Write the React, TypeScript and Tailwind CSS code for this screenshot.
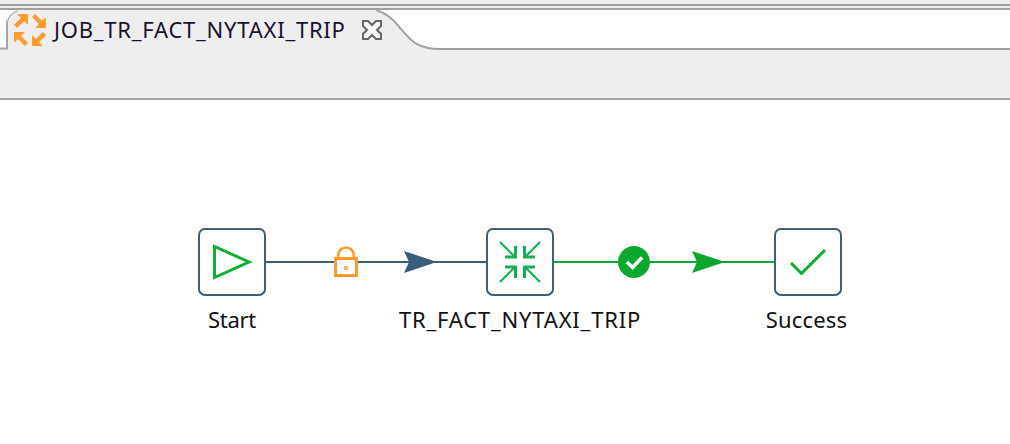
import React from "react";

const font = "font-['Noto_Sans',sans-serif]";

function TabIcon() {
  return (
    <svg width="32" height="32" viewBox="14 14 32 32" className="shrink-0">
      <g fill="#ff9a2e" stroke="#ff9a2e" strokeWidth="1">
        <polygon points="18,14.5 27.5,14.5 27.5,24" />
        <polygon points="45.5,18 45.5,27.5 36,27.5" />
        <polygon points="14.5,42 14.5,32.5 24,32.5" />
        <polygon points="32.5,36 32.5,45.5 42,45.5" />
      </g>
      <g stroke="#ff9a2e" strokeWidth="4.5" fill="none">
        <path d="M15.5 26.5 L23 19" />
        <path d="M33.5 15.5 L41 23" />
        <path d="M26.5 44.5 L19 37" />
        <path d="M44.5 33.5 L37 41" />
      </g>
    </svg>
  );
}

function CloseIcon() {
  return (
    <svg width="20" height="20" viewBox="0 0 20 20" className="shrink-0">
      <path
        d="M1 1 H6 L10 5 L14 1 H19 V6 L15 10 L19 14 V19 H14 L10 15 L6 19 H1 V14 L5 10 L1 6 Z"
        fill="#f6f6f6"
        stroke="#666"
        strokeWidth="2"
      />
    </svg>
  );
}

function PlayIcon() {
  return (
    <svg width="68" height="68" viewBox="0 0 68 68">
      <path d="M16.5 18.5 V49.5 L51 34 Z" fill="none" stroke="#0bb02f" strokeWidth="3" />
    </svg>
  );
}

function MergeIcon() {
  const c = "#14b053";
  return (
    <svg width="68" height="68" viewBox="0 0 68 68">
      <g stroke={c} fill="none" strokeWidth="2.2">
        <path d="M14 14 L28 28" />
        <path d="M54 14 L40 28" />
        <path d="M14 54 L28 40" />
        <path d="M54 54 L40 40" />
      </g>
      <g stroke={c} fill="none" strokeWidth="3">
        <path d="M29.5 18 V29 H19" />
        <path d="M38.5 18 V29 H49" />
        <path d="M29.5 50 V39 H19" />
        <path d="M38.5 50 V39 H49" />
      </g>
    </svg>
  );
}

function CheckIcon() {
  return (
    <svg width="68" height="68" viewBox="0 0 68 68">
      <path d="M17 35 L27.5 45.5 L51 22" fill="none" stroke="#0bb02f" strokeWidth="3" />
    </svg>
  );
}

function Node({ label, spacing, children }: { label: string; spacing: string; children: React.ReactNode }) {
  return (
    <div className="flex w-[68px] shrink-0 flex-col items-center">
      <div className="h-[68px] w-[68px] rounded-[7px] border-2 border-[#3b5f7a] bg-white [&>svg]:-m-[2px]">
        {children}
      </div>
      <div className={`mt-[9px] whitespace-nowrap text-[22px] leading-[28px] text-[#111111] ${spacing}`}>{label}</div>
    </div>
  );
}

function LockConnector() {
  return (
    <svg width="220" height="68" viewBox="0 0 220 68" className="shrink-0">
      <path d="M0 34 H220" stroke="#3b5f7a" strokeWidth="2" />
      <path d="M72.2 30 V 27.25 a7.75 7.75 0 0 1 15.6 0 V30" fill="none" stroke="#ff9a2e" strokeWidth="2.6" />
      <rect x="69.5" y="30.5" width="21" height="17" fill="#fff" stroke="#ff9a2e" strokeWidth="3" />
      <rect x="78" y="38" width="4" height="4" fill="#ffb566" />
      <polygon points="138,23 171,34 138,45 143,34" fill="#3b5f7a" />
    </svg>
  );
}

function OkConnector() {
  return (
    <svg width="220" height="68" viewBox="0 0 220 68" className="shrink-0">
      <path d="M0 34 H220" stroke="#0aa82f" strokeWidth="2" />
      <circle cx="80" cy="34" r="16" fill="#0aa82f" />
      <path d="M73 34 L78.5 39.5 L88 29.5" fill="none" stroke="#fff" strokeWidth="3.5" />
      <polygon points="138,23 171,34 138,45 143,34" fill="#0aa82f" />
    </svg>
  );
}

export default function App() {
  return (
    <div className={`h-[444px] w-[1010px] overflow-hidden bg-white ${font}`}>
      <div className="h-[100px] border-b-2 border-[#a0a0a0] bg-[#eeeeee]">
        <div className="h-[4px]" />
        <div className="h-[2px] bg-[#a0a0a0]" />
        <div className="h-[2px]" />
        <div className="h-[2px] bg-[#a0a0a0]" />
        <div className="flex h-[40px]">
          <svg width="20" height="40" viewBox="0 0 20 40" className="shrink-0">
            <rect width="20" height="40" fill="#eee" />
            <path d="M0 0 H7 V38 H0 Z" fill="#fff" />
            <path d="M0 38.5 H7 V12 Q8 4 18 0" fill="none" stroke="#a5a5a5" strokeWidth="2" />
            <path d="M0 0 H18 Q8 4 7 12 V0 Z" fill="#fff" opacity="0.9" />
          </svg>
          <div className="flex w-[356px] shrink-0 items-start">
            <div className="-ml-[6px] mt-[4px] shrink-0">
              <TabIcon />
            </div>
            <div className="ml-[8px] mt-[3px] whitespace-nowrap text-[22px] leading-[32px] tracking-[0.76px] text-[#1a1030]">
              JOB_TR_FACT_NYTAXI_TRIP
            </div>
            <div className="ml-[16px] mt-[10px]">
              <CloseIcon />
            </div>
          </div>
          <svg width="64" height="40" viewBox="0 0 64 40" className="shrink-0">
            <path d="M0 0 H64 V39 C 40 39 35 30 24 18 C 18 10 12 4 0 0 Z" fill="#fff" />
            <path d="M0 0 C 12 4 18 10 24 18 C 35 30 40 39 64 39" fill="none" stroke="#a0a0a0" strokeWidth="2" />
          </svg>
          <div className="flex-1 border-b-2 border-[#a0a0a0] bg-white" />
        </div>
      </div>
      <div className="flex items-start pl-[198px] pt-[128px]">
        <Node label="Start" spacing="tracking-[-0.3px]">
          <PlayIcon />
        </Node>
        <LockConnector />
        <Node label="TR_FACT_NYTAXI_TRIP" spacing="tracking-[0.8px]">
          <MergeIcon />
        </Node>
        <OkConnector />
        <Node label="Success" spacing="mr-[3px] tracking-[0.2px]">
          <CheckIcon />
        </Node>
      </div>
    </div>
  );
}
